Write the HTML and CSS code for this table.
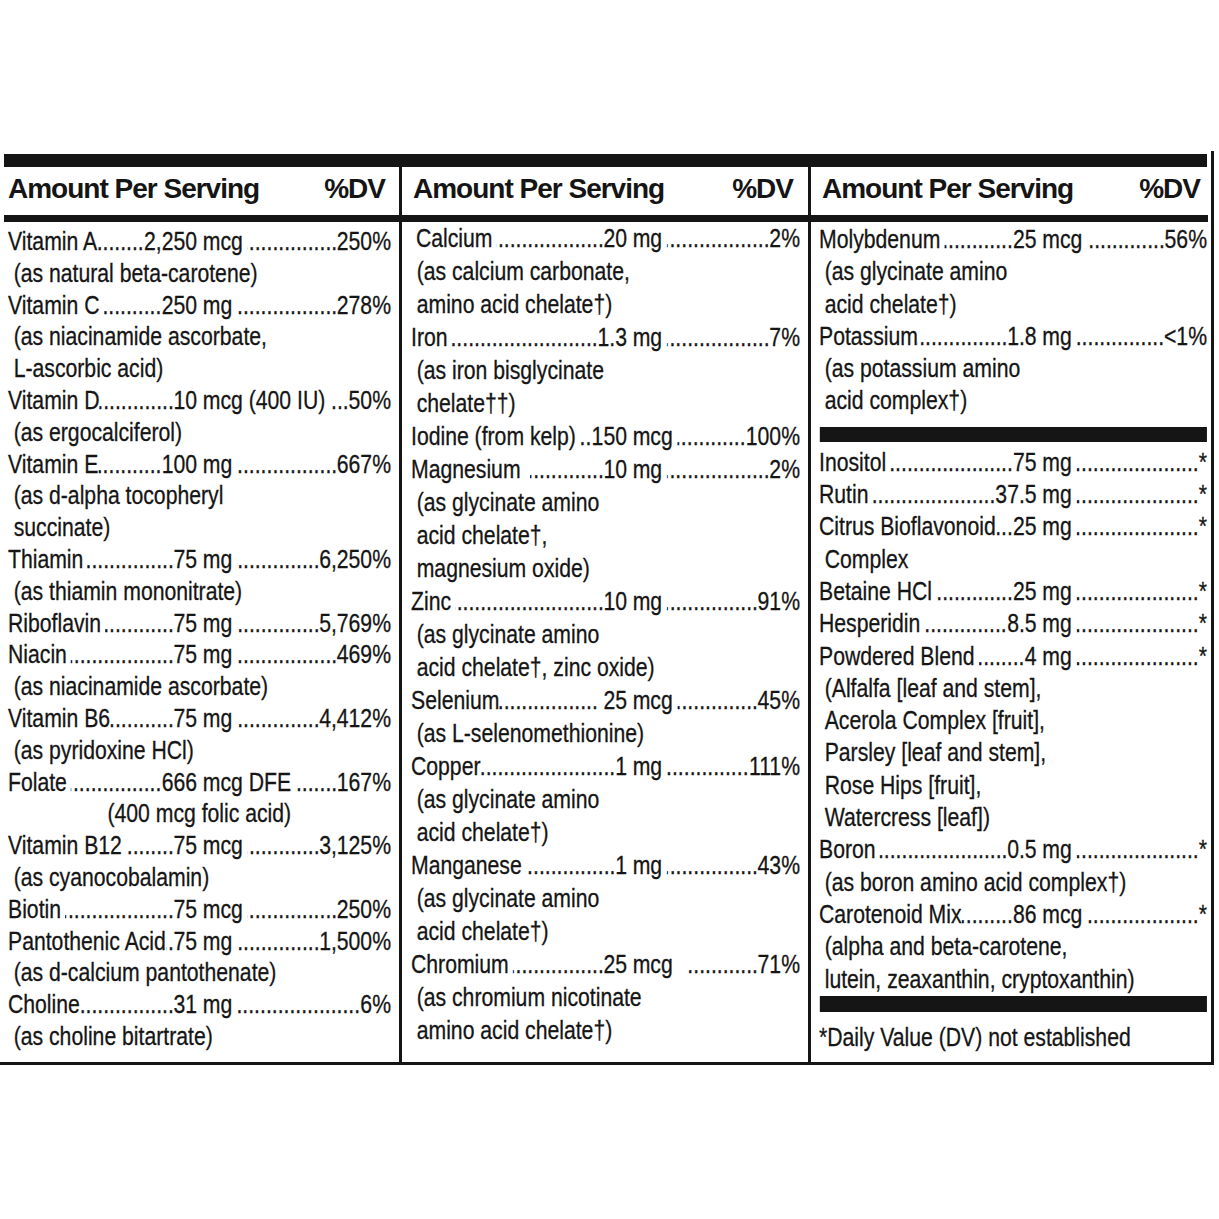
FILE: index.html
```html
<!DOCTYPE html>
<html lang="en">
<head>
<meta charset="utf-8">
<title>Supplement Facts</title>
<link rel="stylesheet" href="styles.css">
</head>
<body>
<div class="panel">
  <div class="topbar"></div>
  <div class="head">
    <div class="hcell c1"><span>Amount Per Serving</span><span>%DV</span></div>
    <div class="hcell c2"><span>Amount Per Serving</span><span>%DV</span></div>
    <div class="hcell c3"><span>Amount Per Serving</span><span>%DV</span></div>
  </div>
  <div class="rule"></div>
  <div class="body">
    <div class="col c1"><div class="in">
      <div class="row"><span class="a"><span class="nm t">Vitamin A</span><i class="ld"></i><span class="num">2,250</span></span><span class="u">mcg</span><i class="ld"></i><span class="dv">250%</span></div>
      <div class="sub">(as natural beta-carotene)</div>
      <div class="row"><span class="a"><span class="nm">Vitamin C</span><i class="ld"></i><span class="num">250</span></span><span class="u">mg</span><i class="ld"></i><span class="dv">278%</span></div>
      <div class="sub">(as niacinamide ascorbate,</div>
      <div class="sub">L-ascorbic acid)</div>
      <div class="row"><span class="a"><span class="nm t">Vitamin D</span><i class="ld"></i><span class="num">10</span></span><span class="u">mcg (400 IU)</span><i class="ld"></i><span class="dv">50%</span></div>
      <div class="sub">(as ergocalciferol)</div>
      <div class="row"><span class="a"><span class="nm t">Vitamin E</span><i class="ld"></i><span class="num">100</span></span><span class="u">mg</span><i class="ld"></i><span class="dv">667%</span></div>
      <div class="sub">(as d-alpha tocopheryl</div>
      <div class="sub">succinate)</div>
      <div class="row"><span class="a"><span class="nm">Thiamin</span><i class="ld"></i><span class="num">75</span></span><span class="u">mg</span><i class="ld"></i><span class="dv">6,250%</span></div>
      <div class="sub">(as thiamin mononitrate)</div>
      <div class="row"><span class="a"><span class="nm">Riboflavin</span><i class="ld"></i><span class="num">75</span></span><span class="u">mg</span><i class="ld"></i><span class="dv">5,769%</span></div>
      <div class="row"><span class="a"><span class="nm">Niacin</span><i class="ld"></i><span class="num">75</span></span><span class="u">mg</span><i class="ld"></i><span class="dv">469%</span></div>
      <div class="sub">(as niacinamide ascorbate)</div>
      <div class="row"><span class="a"><span class="nm t">Vitamin B6</span><i class="ld"></i><span class="num">75</span></span><span class="u">mg</span><i class="ld"></i><span class="dv">4,412%</span></div>
      <div class="sub">(as pyridoxine HCl)</div>
      <div class="row"><span class="a"><span class="nm">Folate</span><i class="ld"></i><span class="num">666</span></span><span class="u">mcg DFE</span><i class="ld"></i><span class="dv">167%</span></div>
      <div class="sub deep">(400 mcg folic acid)</div>
      <div class="row"><span class="a"><span class="nm">Vitamin B12</span><i class="ld"></i><span class="num">75</span></span><span class="u">mcg</span><i class="ld"></i><span class="dv">3,125%</span></div>
      <div class="sub">(as cyanocobalamin)</div>
      <div class="row"><span class="a"><span class="nm">Biotin</span><i class="ld"></i><span class="num">75</span></span><span class="u">mcg</span><i class="ld"></i><span class="dv">250%</span></div>
      <div class="row"><span class="a"><span class="nm t">Pantothenic Acid</span><i class="ld"></i><span class="num">75</span></span><span class="u">mg</span><i class="ld"></i><span class="dv">1,500%</span></div>
      <div class="sub">(as d-calcium pantothenate)</div>
      <div class="row"><span class="a"><span class="nm t">Choline</span><i class="ld"></i><span class="num">31</span></span><span class="u">mg</span><i class="ld"></i><span class="dv">6%</span></div>
      <div class="sub">(as choline bitartrate)</div>
    </div></div>
    <div class="col c2"><div class="in">
      <div class="row ind"><span class="a"><span class="nm">Calcium</span><i class="ld"></i><span class="num">20</span></span><span class="u">mg</span><i class="ld"></i><span class="dv">2%</span></div>
      <div class="sub">(as calcium carbonate,</div>
      <div class="sub">amino acid chelate†)</div>
      <div class="row"><span class="a"><span class="nm">Iron</span><i class="ld"></i><span class="num">1.3</span></span><span class="u">mg</span><i class="ld"></i><span class="dv">7%</span></div>
      <div class="sub">(as iron bisglycinate</div>
      <div class="sub">chelate††)</div>
      <div class="row"><span class="a"><span class="nm">Iodine (from kelp)</span><i class="ld"></i><span class="num">150</span></span><span class="u">mcg</span><i class="ld"></i><span class="dv">100%</span></div>
      <div class="row"><span class="a"><span class="nm w">Magnesium</span><i class="ld"></i><span class="num">10</span></span><span class="u">mg</span><i class="ld"></i><span class="dv">2%</span></div>
      <div class="sub">(as glycinate amino</div>
      <div class="sub">acid chelate†,</div>
      <div class="sub">magnesium oxide)</div>
      <div class="row"><span class="a"><span class="nm">Zinc</span><i class="ld"></i><span class="num">10</span></span><span class="u">mg</span><i class="ld"></i><span class="dv">91%</span></div>
      <div class="sub">(as glycinate amino</div>
      <div class="sub">acid chelate†, zinc oxide)</div>
      <div class="row"><span class="a"><span class="nm t">Selenium</span><i class="ld sp"></i><span class="num">25</span></span><span class="u">mcg</span><i class="ld"></i><span class="dv">45%</span></div>
      <div class="sub">(as L-selenomethionine)</div>
      <div class="row"><span class="a"><span class="nm t">Copper</span><i class="ld"></i><span class="num">1</span></span><span class="u">mg</span><i class="ld"></i><span class="dv">111%</span></div>
      <div class="sub">(as glycinate amino</div>
      <div class="sub">acid chelate†)</div>
      <div class="row"><span class="a"><span class="nm">Manganese</span><i class="ld"></i><span class="num">1</span></span><span class="u">mg</span><i class="ld"></i><span class="dv">43%</span></div>
      <div class="sub">(as glycinate amino</div>
      <div class="sub">acid chelate†)</div>
      <div class="row"><span class="a"><span class="nm">Chromium</span><i class="ld"></i><span class="num">25</span></span><span class="u wide">mcg</span><i class="ld"></i><span class="dv">71%</span></div>
      <div class="sub">(as chromium nicotinate</div>
      <div class="sub">amino acid chelate†)</div>
    </div></div>
    <div class="col c3"><div class="in">
      <div class="row"><span class="a"><span class="nm">Molybdenum</span><i class="ld"></i><span class="num">25</span></span><span class="u">mcg</span><i class="ld"></i><span class="dv">56%</span></div>
      <div class="sub">(as glycinate amino</div>
      <div class="sub">acid chelate†)</div>
      <div class="row"><span class="a"><span class="nm t">Potassium</span><i class="ld"></i><span class="num">1.8</span></span><span class="u">mg</span><i class="ld"></i><span class="dv">&lt;1%</span></div>
      <div class="sub">(as potassium amino</div>
      <div class="sub">acid complex†)</div>
      <div class="bar bar1"></div>
      <div class="row"><span class="a"><span class="nm">Inositol</span><i class="ld"></i><span class="num">75</span></span><span class="u">mg</span><i class="ld"></i><span class="dv">*</span></div>
      <div class="row"><span class="a"><span class="nm">Rutin</span><i class="ld"></i><span class="num">37.5</span></span><span class="u">mg</span><i class="ld"></i><span class="dv">*</span></div>
      <div class="row"><span class="a"><span class="nm t">Citrus Bioflavonoid</span><i class="ld"></i><span class="num">25</span></span><span class="u">mg</span><i class="ld"></i><span class="dv">*</span></div>
      <div class="sub">Complex</div>
      <div class="row"><span class="a"><span class="nm">Betaine HCl</span><i class="ld"></i><span class="num">25</span></span><span class="u">mg</span><i class="ld"></i><span class="dv">*</span></div>
      <div class="row"><span class="a"><span class="nm">Hesperidin</span><i class="ld"></i><span class="num">8.5</span></span><span class="u">mg</span><i class="ld"></i><span class="dv">*</span></div>
      <div class="row"><span class="a"><span class="nm">Powdered Blend</span><i class="ld"></i><span class="num">4</span></span><span class="u">mg</span><i class="ld"></i><span class="dv">*</span></div>
      <div class="sub">(Alfalfa [leaf and stem],</div>
      <div class="sub">Acerola Complex [fruit],</div>
      <div class="sub">Parsley [leaf and stem],</div>
      <div class="sub">Rose Hips [fruit],</div>
      <div class="sub">Watercress [leaf])</div>
      <div class="row"><span class="a"><span class="nm">Boron</span><i class="ld"></i><span class="num">0.5</span></span><span class="u">mg</span><i class="ld"></i><span class="dv">*</span></div>
      <div class="sub">(as boron amino acid complex†)</div>
      <div class="row"><span class="a"><span class="nm t">Carotenoid Mix</span><i class="ld"></i><span class="num">86</span></span><span class="u">mcg</span><i class="ld"></i><span class="dv">*</span></div>
      <div class="sub">(alpha and beta-carotene,</div>
      <div class="sub">lutein, zeaxanthin, cryptoxanthin)</div>
      <div class="bar bar2"></div>
      <div class="note">*Daily Value (DV) not established</div>
    </div></div>
  </div>
  <div class="bottom"></div>
</div>
</body>
</html>
```
FILE: styles.css
```css
html, body {
  margin: 0;
  padding: 0;
  background: #ffffff;
}

body {
  color: #151515;
  font-family: "Liberation Sans", Arial, sans-serif;
  font-size: 26px;
}

.panel {
  margin: 151px 0 0 4px;
  width: 1207px;
  border-right: 3px solid #151515;
  padding-top: 3px;
}

.topbar {
  height: 13px;
  margin-right: 4px;
  background: #151515;
}

.head {
  display: grid;
  grid-template-columns: 398px 409px 400px;
}

.hcell {
  height: 48px;
  line-height: 44px;
  display: flex;
  justify-content: space-between;
  font-weight: bold;
  font-size: 28px;
  letter-spacing: -1px;
  white-space: nowrap;
}

.hcell.c1 { padding: 0 14px 0 4px; border-right: 3px solid #151515; }
.hcell.c2 { padding: 0 15px 0 11px; border-right: 3px solid #151515; }
.hcell.c3 { padding: 0 11px 0 11px; }

.rule {
  height: 7px;
  margin-right: 3px;
  background: #151515;
}

.body {
  display: grid;
  grid-template-columns: 398px 409px 400px;
  height: 840px;
}

.col {
  white-space: nowrap;
  min-width: 0;
}

/* condensed type: the text block is laid out wider, then narrowed */
.in {
  width: 122.7%;
  transform: scaleX(0.815);
  transform-origin: 0 0;
  -webkit-text-stroke: 0.3px #151515;
}

.col.c1 {
  padding: 4px 8px 0 4px;
  line-height: 31.8px;
  border-right: 3px solid #151515;
}

.col.c2 {
  padding: 0 8px 0 9px;
  line-height: 33px;
  border-right: 3px solid #151515;
}

.col.c3 {
  padding: 1px 4px 0 8px;
  line-height: 32.3px;
}

.row {
  display: flex;
}

.a {
  display: flex;
  flex: none;
  box-sizing: border-box;
}

.c1 .a { width: 232px; }
.c2 .a { width: 265px; }
.c3 .a { width: 267px; }

.row.ind .a { padding-left: 6px; }

.nm {
  flex: none;
  margin-right: 5px;
}

.nm.t { margin-right: 0; }
.nm.w { margin-right: 12px; }

.ld {
  flex: 1 1 auto;
  min-width: 0;
  overflow: hidden;
  direction: rtl;
  font-style: normal;
}

.ld::before {
  content: "................................................................................................";
}

.ld.sp { margin-right: 7px; }

.num { flex: none; }

.u {
  flex: none;
  margin-left: 7px;
  margin-right: 6px;
}

.u.wide { margin-right: 17px; }

.dv { flex: none; }

.sub {
  padding-left: 7px;
}

.sub.deep {
  padding-left: 122px;
}

.bar {
  background: #151515;
}

.bar1 {
  height: 15px;
  margin: 10px 0 4px 1px;
}

.bar2 {
  height: 16px;
  margin: 1px 0 9px 1px;
}

.bottom {
  height: 3px;
  margin-left: -4px;
  background: #151515;
}
```
